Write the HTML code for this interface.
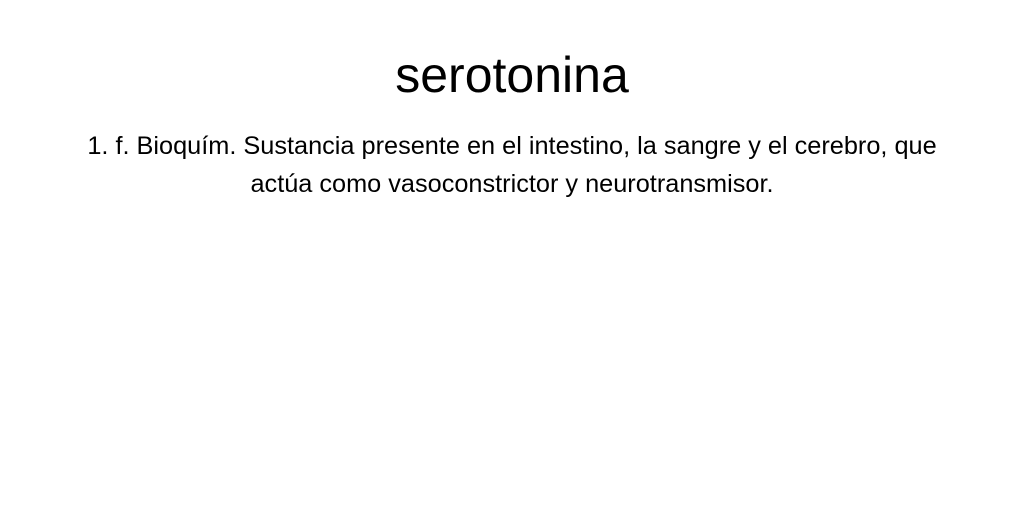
<!DOCTYPE html>
<html><head><meta charset="utf-8"><style>
html,body{margin:0;padding:0;background:#fff;width:1024px;height:512px;overflow:hidden}
body{font-family:"Liberation Sans",sans-serif;color:#000;text-align:center}
h1{font-weight:normal;font-size:50px;margin:0;position:absolute;top:45px;left:0;width:1024px;line-height:60px}
p{position:absolute;top:127px;left:72px;width:880px;margin:0;font-size:22px;line-height:38px;word-spacing:0px;transform:scaleX(1.0)}
p span{display:inline-block}
</style></head><body>
<h1>serotonina</h1>
<p style="font-size:25.3px;">1. f. Bioquím. Sustancia presente en el intestino, la sangre y el cerebro, que actúa como vasoconstrictor y neurotransmisor.</p>
</body></html>
